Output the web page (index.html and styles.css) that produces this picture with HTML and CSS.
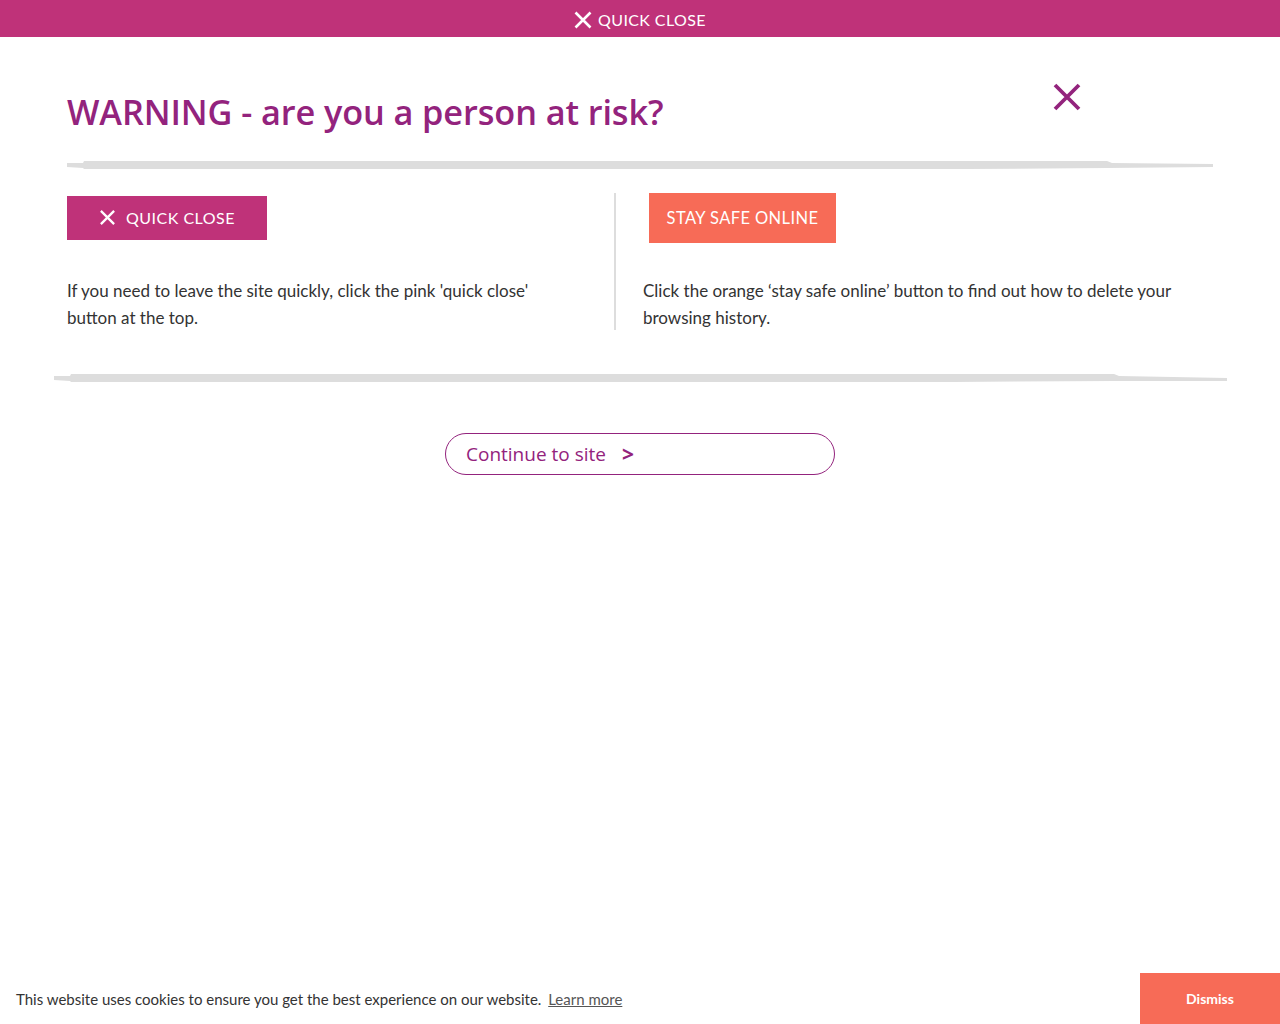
FILE: index.html
```html
<!DOCTYPE html>
<html lang="en">
<head>
<meta charset="utf-8">
<title>Warning</title>
<link rel="stylesheet" href="styles.css">
</head>
<body>
<header class="topbar">
  <a class="topbar-link" href="#">
    <svg class="x-icon" width="18" height="18" viewBox="0 0 18 18"><path d="M1.5 1.5L16.5 16.5M16.5 1.5L1.5 16.5" stroke="#fff" stroke-width="2.6" stroke-linecap="butt"/></svg>
    <span>QUICK CLOSE</span>
  </a>
</header>

<main class="modal">
  <div class="modal-head">
    <h1 class="title">WARNING - are you a person at risk?</h1>
    <svg class="close-x" width="28" height="28" viewBox="0 0 28 28"><path d="M2 2L26 26M26 2L2 26" stroke="#93237d" stroke-width="3.8"/></svg>
  </div>

  <svg class="brush brush-1" viewBox="0 0 1146 8" preserveAspectRatio="none"><polygon points="0,2 16,2 17,0 1040,0 1045,2 1146,3 1146,6 1040,7 900,8 17,8 16,7 0,6" fill="#dddddd"/></svg>

  <div class="cols">
    <section class="col col-left">
      <a class="btn-quick" href="#">
        <svg width="17" height="17" viewBox="0 0 18 18"><path d="M2 2L16 16M16 2L2 16" stroke="#fff" stroke-width="2.4"/></svg>
        <span>QUICK CLOSE</span>
      </a>
      <p class="copy">If you need to leave the site quickly, click the pink 'quick close' button at the top.</p>
    </section>
    <div class="vrule"></div>
    <section class="col col-right">
      <a class="btn-safe" href="#">STAY SAFE ONLINE</a>
      <p class="copy">Click the orange ‘stay safe online’ button to find out how to delete your browsing history.</p>
    </section>
  </div>

  <svg class="brush brush-2" viewBox="0 0 1173 8" preserveAspectRatio="none"><polygon points="0,2 16,2 17,0 1060,0 1065,2 1173,4 1173,7 1060,7 900,8 17,8 16,7 0,6" fill="#dddddd"/></svg>

  <div class="continue-wrap">
    <a class="btn-continue" href="#"><span>Continue to site</span><span class="chev">&gt;</span></a>
  </div>
</main>

<div class="cookie">
  <p class="cookie-text">This website uses cookies to ensure you get the best experience on our website. <a href="#" class="learn">Learn more</a></p>
  <a href="#" class="dismiss">Dismiss</a>
</div>
</body>
</html>
```

FILE: styles.css
```css
* { box-sizing: border-box; }
html, body { margin: 0; padding: 0; background: #fff; }
body {
  font-family: "Lato", "Open Sans", sans-serif;
  color: #333;
  min-height: 1024px;
  position: relative;
}
a { text-decoration: none; }

.topbar {
  height: 37px;
  background: #bf3279;
  display: flex;
  justify-content: center;
  align-items: center;
}
.topbar-link {
  display: flex;
  align-items: center;
  gap: 6px;
  color: #fff;
  font-size: 16px;
  letter-spacing: 0.4px;
  padding-top: 2px;
}

.modal {
  padding: 0 0 0 67px;
  width: 1213px;
}
.modal-head {
  display: flex;
  justify-content: space-between;
  align-items: flex-start;
  padding-top: 58px;
  padding-right: 132px;
  height: 124px;
}
.title {
  margin: 0;
  font-family: "Open Sans", sans-serif;
  font-weight: 600;
  font-size: 34.3px;
  letter-spacing: -0.1px;
  color: #93237d;
  line-height: 1;
}
.close-x { margin-top: -12px; }

.brush { display: block; height: 8px; }
.brush-1 { width: 1146px; }
.brush-2 { width: 1173px; margin-left: -13px; }

.cols {
  display: flex;
  padding-top: 24px;
  height: 205px;
}
.col { display: flex; flex-direction: column; }
.col-left { width: 520px; padding-top: 3px; }
.col-left .copy { width: 490px; }
.col-right { width: 560px; }
.vrule {
  width: 2px;
  height: 137px;
  background: #ddd;
  margin: 0 27px;
}

.btn-quick {
  display: flex;
  align-items: center;
  justify-content: center;
  gap: 10px;
  width: 200px;
  height: 44px;
  padding-bottom: 2px;
  background: #bf3279;
  color: #fff;
  font-size: 16px;
  letter-spacing: 0.5px;
}
.btn-safe {
  display: flex;
  align-items: center;
  justify-content: center;
  width: 187px;
  height: 50px;
  margin-left: 6px;
  background: #f76b57;
  color: #fff;
  font-size: 16.5px;
  letter-spacing: 0.4px;
}
.copy {
  margin: 0;
  font-size: 17px;
  line-height: 27px;
  color: #333;
}
.col-left .copy { margin-top: 37px; }
.col-right .copy { margin-top: 34px; }

.continue-wrap {
  display: flex;
  justify-content: center;
  padding-top: 51px;
  margin-left: -67px;
  width: 1280px;
}
.btn-continue {
  display: flex;
  align-items: center;
  gap: 16px;
  width: 390px;
  height: 42px;
  border: 1px solid #93237d;
  border-radius: 21px;
  padding-left: 20px;
  color: #93237d;
  font-family: "Open Sans", sans-serif;
  font-size: 19px;
  font-weight: 500;
}
.chev { font-weight: 700; font-size: 21px; }

.cookie {
  position: absolute;
  left: 0; right: 0; bottom: 0;
  height: 51px;
  display: flex;
  align-items: center;
  justify-content: space-between;
  background: #fff;
}
.cookie-text {
  margin: 0 0 0 16px;
  font-size: 15px;
  color: #333;
}
.learn { color: #555; text-decoration: underline; margin-left: 3px; }
.dismiss {
  width: 140px;
  height: 51px;
  background: #f76b57;
  color: #fff;
  font-weight: 700;
  font-size: 14px;
  display: flex;
  align-items: center;
  justify-content: center;
}
```
